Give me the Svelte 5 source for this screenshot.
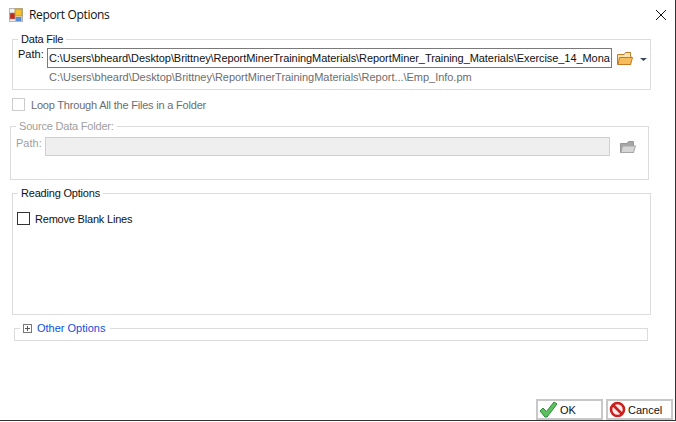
<script>
  let removeBlank = $state(false);
  let loopFiles = $state(false);
  const dataPath = 'C:\\Users\\bheard\\Desktop\\Brittney\\ReportMinerTrainingMaterials\\ReportMiner_Training_Materials\\Exercise_14_Mona';
  const shortPath = 'C:\\Users\\bheard\\Desktop\\Brittney\\ReportMinerTrainingMaterials\\Report...\\Emp_Info.pm';
</script>

<div class="window">
  <header class="titlebar">
    <svg class="app-icon" width="14" height="14" viewBox="0 0 14 14">
      <rect x="0.5" y="0.5" width="13" height="13" fill="#f2f2f2" stroke="#b5b5b5" />
      <rect x="1" y="5" width="5" height="6" fill="#c8281c" stroke="#8e8e8e" stroke-width="0.6" />
      <rect x="6" y="1" width="7" height="7" fill="#f5c22c" stroke="#c08a20" stroke-width="0.8" />
      <rect x="6.5" y="9" width="6" height="4" fill="#5a8fd8" />
    </svg>
    <span class="title">Report Options</span>
    <svg class="close" width="12" height="12" viewBox="0 0 12 12">
      <path d="M1 1 L11 11 M11 1 L1 11" stroke="#111" stroke-width="1" fill="none" />
    </svg>
  </header>

  <fieldset class="group data-file">
    <legend>Data File</legend>
    <div class="path-row">
      <span class="label">Path:</span>
      <div class="path-input">{dataPath}</div>
      <svg class="folder" width="16" height="13" viewBox="0 0 16 13">
        <path d="M0.5 2.5 H7 L8.5 0.5 H13.5 V4 H14 L13.5 12.5 H0.5 Z" fill="#fbe3ae" stroke="#c57a24" />
        <path d="M1 12.5 L2.5 5.5 H15.5 L13.5 12.5 Z" fill="#f7bd5c" stroke="#c57a24" />
      </svg>
      <svg class="caret" width="7" height="3" viewBox="0 0 7 3">
        <path d="M0 0 H7 L3.5 3 Z" fill="#3b4658" />
      </svg>
    </div>
    <div class="short-path">{shortPath}</div>
  </fieldset>

  <label class="check loop">
    <input type="checkbox" disabled bind:checked={loopFiles} />
    <span class="box"></span>
    <span>Loop Through All the Files in a Folder</span>
  </label>

  <fieldset class="group source" disabled>
    <legend>Source Data Folder:</legend>
    <div class="path-row">
      <span class="label">Path:</span>
      <div class="path-input off"></div>
      <svg class="folder" width="16" height="12" viewBox="0 0 16 12">
        <path d="M0.5 2.5 H7 L8.5 0.5 H13.5 V4 L13.5 11.5 H0.5 Z" fill="#a6a6a6" stroke="#979797" />
        <path d="M1 11.5 L2.5 5 H15.5 L13.5 11.5 Z" fill="#d6d6d6" stroke="#a6a6a6" />
      </svg>
    </div>
  </fieldset>

  <fieldset class="group reading">
    <legend>Reading Options</legend>
    <label class="check">
      <input type="checkbox" bind:checked={removeBlank} />
      <span class="box dark"></span>
      <span>Remove Blank Lines</span>
    </label>
  </fieldset>

  <fieldset class="group other">
    <legend>
      <span class="plus"></span>
      <span class="link">Other Options</span>
    </legend>
  </fieldset>

  <footer class="buttons">
    <button class="ok">
      <svg width="19" height="17" viewBox="0 0 19 17">
        <path d="M1 10 L4 7 L7.5 10.5 L15 1 L18 3 L8 16 L6 16 Z" fill="#5cc05c" stroke="#2e8b3e" stroke-width="1" />
      </svg>
      OK
    </button>
    <button class="cancel">
      <svg width="17" height="17" viewBox="0 0 17 17">
        <circle cx="8.5" cy="8.5" r="6.5" fill="#fbeaea" stroke="#c8201e" stroke-width="2.6" />
        <path d="M4 4 L13 13" stroke="#c8201e" stroke-width="2.6" />
      </svg>
      Cancel
    </button>
  </footer>
</div>

<style>
  :global(body) {
    margin: 0;
    background: #fff;
  }

  .window {
    box-sizing: border-box;
    width: 676px;
    height: 421px;
    border-right: 1px solid #333;
    border-bottom: 1px solid #333;
    background: #fff;
    font-family: "Liberation Sans", Arial, sans-serif;
    font-size: 11px;
    letter-spacing: -0.2px;
    color: #111;
    display: flex;
    flex-direction: column;
    position: relative;
  }

  .titlebar {
    display: flex;
    align-items: center;
    height: 29px;
    padding: 0 8px 0 9px;
  }

  .app-icon {
    margin-right: 6px;
  }

  .title {
    font-family: "Open Sans", sans-serif;
    font-size: 12px;
    letter-spacing: -0.35px;
    flex: 1;
  }

  .group {
    box-sizing: border-box;
    margin: 0;
    padding: 0;
    min-width: 0;
    border: 1px solid #dcdcdc;
  }

  .group legend {
    padding: 0 3px;
    margin-left: 5px;
    line-height: 13px;
  }

  .data-file {
    margin: 4px 0 0 12px;
    width: 639px;
    height: 57px;
  }

  .path-row {
    display: flex;
    align-items: center;
    margin-top: 2px;
    padding-left: 5px;
  }

  .label {
    width: 29px;
    margin-top: -8px;
    letter-spacing: 0;
  }

  .path-input {
    box-sizing: border-box;
    width: 565px;
    height: 20px;
    border: 1px solid #7a7a7a;
    padding: 0 0 0 1px;
    line-height: 18px;
    letter-spacing: -0.07px;
    white-space: nowrap;
    overflow: hidden;
  }

  .path-input.off {
    border: 1px solid #cfcfcf;
    background: #efefef;
    height: 19px;
  }

  .folder {
    margin-left: 5px;
  }

  .caret {
    margin-left: 7px;
    margin-top: 2px;
  }

  .short-path {
    margin: 3px 0 0 36px;
    letter-spacing: -0.03px;
    color: #6d6d6d;
  }

  .check {
    display: flex;
    align-items: center;
    gap: 6px;
  }

  .check input {
    display: none;
  }

  .box {
    box-sizing: border-box;
    width: 13px;
    height: 13px;
    border: 1px solid #cccccc;
  }

  .box.dark {
    border-color: #333;
  }

  .loop {
    margin: 8px 0 0 12px;
    color: #6d6d6d;
  }

  .source {
    margin: 9px 0 0 10px;
    width: 639px;
    height: 60px;
    color: #a0a0a0;
  }

  .source .path-row {
    margin-top: 4px;
  }

  .source .folder {
    margin-left: 10px;
  }

  .reading {
    margin: 7px 0 0 12px;
    width: 639px;
    height: 128px;
  }

  .reading .check {
    margin: 12px 0 0 4px;
    gap: 5px;
  }

  .other {
    margin: 7px 0 0 14px;
    width: 634px;
    height: 19px;
  }

  .other legend {
    display: flex;
    align-items: center;
    gap: 5px;
    margin-left: 5px;
    padding: 0 5px 0 3px;
    letter-spacing: 0;
  }

  .plus {
    box-sizing: border-box;
    width: 9px;
    height: 9px;
    border: 1px solid #777;
    background:
      linear-gradient(#555, #555) center / 5px 1px no-repeat,
      linear-gradient(#555, #555) center / 1px 5px no-repeat;
  }

  .link {
    color: #0f4fe0;
  }

  .buttons {
    position: absolute;
    right: 2px;
    bottom: 0;
    display: flex;
    gap: 3px;
  }

  .buttons button {
    box-sizing: border-box;
    height: 21px;
    width: 67px;
    display: flex;
    align-items: center;
    gap: 2px;
    padding: 0 0 0 1px;
    border: 2px solid #c8c8c8;
    background: #fff;
    font: inherit;
    letter-spacing: 0;
    color: #111;
  }
</style>
